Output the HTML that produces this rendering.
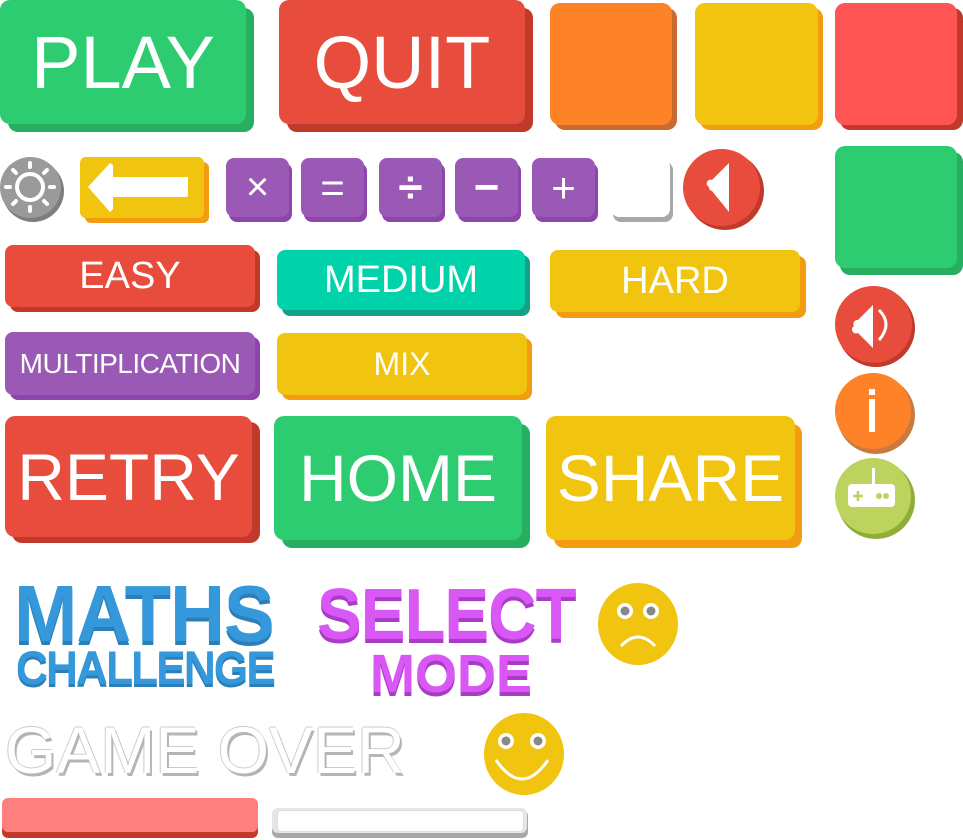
<!DOCTYPE html>
<html><head><meta charset="utf-8"><style>
body{margin:0;width:963px;height:840px;background:#fff;position:relative;overflow:hidden;font-family:"Liberation Sans",sans-serif}
.b{position:absolute;border-radius:10px}
.t{position:absolute;color:#fff;display:flex;align-items:center;justify-content:center;white-space:nowrap}
.c{position:absolute;border-radius:50%}
svg{position:absolute}
.s{transform-origin:0 50%}
</style></head><body>
<div class="b" style="left:8px;top:8px;width:246px;height:124px;background:#27ae60"></div>
<div class="b t" style="left:0;top:0;width:246px;height:124px;background:#2ecc71;font-size:74px">PLAY</div>
<div class="b" style="left:287px;top:8px;width:246px;height:124px;background:#c0392b"></div>
<div class="b t" style="left:279px;top:0;width:246px;height:124px;background:#e74c3c;font-size:74px">QUIT</div>
<div class="b" style="left:555px;top:8px;width:122px;height:122px;background:#c96a30"></div>
<div class="b" style="left:550px;top:3px;width:122px;height:122px;background:#fe8228"></div>
<div class="b" style="left:700px;top:8px;width:123px;height:122px;background:#f39c12"></div>
<div class="b" style="left:695px;top:3px;width:123px;height:122px;background:#f1c40f"></div>
<div class="b" style="left:840px;top:8px;width:123px;height:122px;background:#c0392b"></div>
<div class="b" style="left:835px;top:3px;width:122px;height:122px;background:#fe5454"></div>
<div class="b" style="left:840px;top:152px;width:123px;height:123px;background:#27ae60"></div>
<div class="b" style="left:835px;top:146px;width:122px;height:122px;background:#2ecc71"></div>
<div class="c" style="left:2px;top:160px;width:62px;height:62px;background:#7d7d7d"></div>
<div class="c" style="left:0;top:157px;width:61px;height:61px;background:#9a9a9a"></div>
<svg style="left:0;top:157px" width="62" height="62" viewBox="0 0 62 62"><g stroke="#fff" stroke-width="4" stroke-linecap="round" fill="none"><circle cx="30" cy="30" r="13"/><path d="M30 10v-4M30 50v4M10 30h-4M50 30h4M16 16l-3-3M44 44l3 3M16 44l-3 3M44 16l3-3"/></g></svg>
<div class="b" style="left:85px;top:162px;width:124px;height:61px;background:#f39c12;border-radius:6px"></div>
<div class="b" style="left:80px;top:157px;width:124px;height:61px;background:#f1c40f;border-radius:6px"></div>
<svg style="left:80px;top:157px" width="124" height="61"><path d="M8 30 L30 6 L33 8 L33 20 L107 20 Q108 20 108 22 L108 38 Q108 40 106 40 L33 40 L33 52 L30 55 Z" fill="#fff"/></svg>
<div class="b" style="left:229px;top:163px;width:63px;height:59px;background:#8e44ad;border-radius:8px"></div>
<div class="b t" style="left:226px;top:158px;width:63px;height:59px;background:#9b59b6;border-radius:8px;font-size:40px;font-weight:300">×</div>
<div class="b" style="left:304px;top:163px;width:63px;height:59px;background:#8e44ad;border-radius:8px"></div>
<div class="b t" style="left:301px;top:158px;width:63px;height:59px;background:#9b59b6;border-radius:8px;font-size:42px">=</div>
<div class="b" style="left:382px;top:163px;width:63px;height:59px;background:#8e44ad;border-radius:8px"></div>
<div class="b t" style="left:379px;top:158px;width:63px;height:59px;background:#9b59b6;border-radius:8px;font-size:44px;font-weight:bold">÷</div>
<div class="b" style="left:458px;top:163px;width:63px;height:59px;background:#8e44ad;border-radius:8px"></div>
<div class="b t" style="left:455px;top:158px;width:63px;height:59px;background:#9b59b6;border-radius:8px;font-size:44px;font-weight:bold">−</div>
<div class="b" style="left:535px;top:163px;width:63px;height:59px;background:#8e44ad;border-radius:8px"></div>
<div class="b t" style="left:532px;top:158px;width:63px;height:59px;background:#9b59b6;border-radius:8px;font-size:42px">+</div>
<div class="b" style="left:613px;top:162px;width:60px;height:60px;background:#a8a8a8;border-radius:8px"></div>
<div class="b" style="left:611px;top:159px;width:59px;height:58px;background:#fff;border-radius:8px"></div>
<div class="c" style="left:686px;top:152px;width:78px;height:78px;background:#c0392b"></div>
<div class="c" style="left:683px;top:149px;width:77px;height:77px;background:#e74c3c"></div>
<svg style="left:683px;top:149px" width="78" height="78"><path d="M26 42 A3.5 3.5 0 0 1 29 35 L46 18 L46 67 L29 46 A3.5 3.5 0 0 1 26 42Z" fill="#fff" transform="translate(0,-4)"/></svg>
<div class="b" style="left:10px;top:250px;width:250px;height:62px;background:#c0392b;border-radius:8px"></div>
<div class="b t" style="left:5px;top:245px;width:250px;height:62px;background:#e74c3c;border-radius:8px;font-size:38px">EASY</div>
<div class="b" style="left:282px;top:255px;width:248px;height:61px;background:#16a085;border-radius:8px"></div>
<div class="b t" style="left:277px;top:250px;width:248px;height:60px;background:#00d2aa;border-radius:8px;font-size:38px">MEDIUM</div>
<div class="b" style="left:556px;top:256px;width:250px;height:62px;background:#f39c12;border-radius:8px"></div>
<div class="b t" style="left:550px;top:250px;width:250px;height:62px;background:#f1c40f;border-radius:8px;font-size:38px">HARD</div>
<div class="b" style="left:10px;top:337px;width:250px;height:63px;background:#8e44ad;border-radius:8px"></div>
<div class="b t" style="left:5px;top:332px;width:250px;height:63px;background:#9b59b6;border-radius:8px;font-size:28px;letter-spacing:-0.5px">MULTIPLICATION</div>
<div class="b" style="left:282px;top:338px;width:250px;height:62px;background:#f39c12;border-radius:8px"></div>
<div class="b t" style="left:277px;top:333px;width:250px;height:62px;background:#f1c40f;border-radius:8px;font-size:32px">MIX</div>
<div class="b" style="left:12px;top:422px;width:248px;height:121px;background:#c0392b"></div>
<div class="b t" style="left:5px;top:416px;width:247px;height:121px;background:#e74c3c;font-size:66px">RETRY</div>
<div class="b" style="left:282px;top:424px;width:248px;height:124px;background:#27ae60"></div>
<div class="b t" style="left:274px;top:416px;width:248px;height:124px;background:#2ecc71;font-size:66px">HOME</div>
<div class="b" style="left:554px;top:424px;width:248px;height:124px;background:#f39c12"></div>
<div class="b t" style="left:546px;top:416px;width:249px;height:124px;background:#f1c40f;font-size:66px">SHARE</div>
<div class="c" style="left:837px;top:289px;width:78px;height:78px;background:#c0392b"></div>
<div class="c" style="left:835px;top:286px;width:77px;height:77px;background:#e74c3c"></div>
<svg style="left:835px;top:286px" width="78" height="78"><path d="M19 40 A4 4 0 0 1 23 34 L38 19 L38 62 L23 47 A4 4 0 0 1 19 40Z" fill="#fff"/><path d="M44 24 Q58 38 44 54" stroke="#fff" stroke-width="3" fill="none"/></svg>
<div class="c" style="left:837px;top:376px;width:78px;height:78px;background:#c87a40"></div>
<div class="c" style="left:835px;top:373px;width:76px;height:76px;background:#fe8228"></div>
<div style="position:absolute;left:869px;top:389px;width:6px;height:6px;background:#fff"></div>
<div style="position:absolute;left:869px;top:399px;width:6px;height:33px;background:#fff"></div>
<div class="c" style="left:837px;top:461px;width:78px;height:78px;background:#8fae38"></div>
<div class="c" style="left:835px;top:458px;width:76px;height:76px;background:#bcd45d"></div>
<svg style="left:835px;top:458px" width="78" height="78"><rect x="37" y="10" width="3" height="16" fill="#fff"/><rect x="13" y="26" width="47" height="23" rx="4" fill="#fff"/><path d="M18 38h10M23 33v10" stroke="#bcd45d" stroke-width="2.5"/><circle cx="44" cy="38" r="3" fill="#bcd45d"/><circle cx="51" cy="38" r="3" fill="#bcd45d"/></svg>
<div class="t s" style="left:14px;top:568px;font-size:80px;font-weight:bold;color:#3498db;text-shadow:0 4px 0 #2a7fb8;letter-spacing:-1px;transform:scaleX(0.95)">MATHS</div>
<div class="t s" style="left:16px;top:640px;font-size:47px;font-weight:bold;color:#3498db;text-shadow:0 3px 0 #2a7fb8;letter-spacing:-2px;transform:scaleX(0.94)">CHALLENGE</div>
<div class="t s" style="left:317px;top:574px;font-size:72px;font-weight:bold;color:#d957f5;text-shadow:0 4px 0 #a93cc4;letter-spacing:-1px;transform:scaleX(0.93)">SELECT</div>
<div class="t" style="left:370px;top:643px;font-size:54px;font-weight:bold;color:#d957f5;text-shadow:0 4px 0 #a93cc4">MODE</div>
<div class="t" style="left:5px;top:712px;font-size:66px;color:#fff;text-shadow:2px 3px 0 #b5b5b5,-1px 0 0 #ccc,0 -1px 0 #ccc">GAME OVER</div>
<svg style="left:596px;top:582px" width="86" height="86"><ellipse cx="42" cy="42" rx="40" ry="41" fill="#f1c40f"/><circle cx="29" cy="29" r="8" fill="#fff"/><circle cx="29" cy="29" r="4.5" fill="#888"/><circle cx="55" cy="29" r="8" fill="#fff"/><circle cx="55" cy="29" r="4.5" fill="#888"/><path d="M25 64 Q42 46 59 64" stroke="#fff" stroke-width="3" fill="none"/></svg>
<svg style="left:482px;top:712px" width="86" height="86"><ellipse cx="42" cy="42" rx="40" ry="41" fill="#f1c40f"/><circle cx="24" cy="29" r="8" fill="#fff"/><circle cx="24" cy="29" r="4.5" fill="#888"/><circle cx="56" cy="29" r="8" fill="#fff"/><circle cx="56" cy="29" r="4.5" fill="#888"/><path d="M14 48 Q40 86 66 48" stroke="#fff" stroke-width="3" fill="none"/></svg>
<div class="b" style="left:2px;top:800px;width:256px;height:38px;background:#c0392b;border-radius:6px"></div>
<div class="b" style="left:2px;top:798px;width:256px;height:34px;background:#ff7f7f;border-radius:6px"></div>
<div class="b" style="left:272px;top:810px;width:256px;height:28px;background:#a8a8a8;border-radius:6px"></div>
<div class="b" style="left:272px;top:808px;width:255px;height:25px;background:#e6e6e6;border-radius:6px"></div>
<div class="b" style="left:277px;top:810px;width:245px;height:20px;background:#fff;border-radius:4px;border:1px solid #ddd"></div>
</body></html>
